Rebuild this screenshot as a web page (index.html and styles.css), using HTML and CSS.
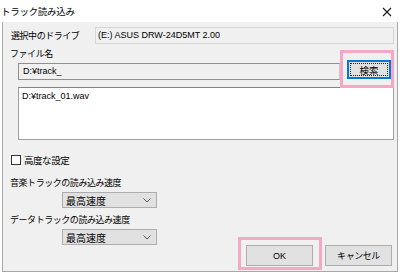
FILE: index.html
```html
<!DOCTYPE html>
<html lang="ja">
<head>
    <meta charset="UTF-8">
    <title>トラック読み込み</title>
    <link rel="stylesheet" href="styles.css">
</head>
<body>
    <div class="dialog">
        <div class="titlebar">
            <span class="title">トラック読み込み</span>
            <svg class="close" width="10" height="10" viewBox="0 0 10 10">
                <path d="M1 1 L9 9 M9 1 L1 9" stroke="#1a1a1a" stroke-width="1.1" fill="none"/>
            </svg>
        </div>
        <div class="content">
            <!-- Drive -->
            <div class="drive-row">
                <span class="drive-label jp">選択中のドライブ</span>
                <div class="readonly">(E:) ASUS DRW-24D5MT 2.00</div>
            </div>

            <!-- File name -->
            <div class="file-label jp">ファイル名</div>
            <div class="file-row">
                <div class="textbox">D:¥track_</div>
                <div class="marked search-wrap">
                    <button class="btn btn-default">検索</button>
                    <span class="mark"></span>
                </div>
            </div>
            <div class="listbox">D:¥track_01.wav</div>

            <div class="lower">
                <div class="options">
                    <div class="check jp"><span class="box"></span>高度な設定</div>
                    <div class="speed-label jp">音楽トラックの読み込み速度</div>
                    <div class="select">
                        <span>最高速度</span>
                        <svg width="8" height="5" viewBox="0 0 8 5"><path d="M0.5 0.5 L4 4 L7.5 0.5" stroke="#555" fill="none"/></svg>
                    </div>
                    <div class="speed-label second jp">データトラックの読み込み速度</div>
                    <div class="select">
                        <span>最高速度</span>
                        <svg width="8" height="5" viewBox="0 0 8 5"><path d="M0.5 0.5 L4 4 L7.5 0.5" stroke="#555" fill="none"/></svg>
                    </div>
                </div>
                <div class="actions">
                    <div class="marked ok-wrap">
                        <button class="btn">OK</button>
                        <span class="mark"></span>
                    </div>
                    <button class="btn jp">キャンセル</button>
                </div>
            </div>
        </div>
    </div>
</body>
</html>
```

FILE: styles.css
```css
body {
    margin: 0;
    background-color: #ffffff;
    font-family: "Liberation Sans", "Noto Sans CJK JP", sans-serif;
    font-size: 9px;
    color: #000;
}
.jp {
    letter-spacing: -0.45px;
}
.dialog {
    width: 400px;
    height: 274px;
    overflow: hidden;
}
.titlebar {
    height: 22px;
    display: flex;
    align-items: center;
    justify-content: space-between;
    background-color: #fff;
}
.title {
    padding-left: 1px;
    font-size: 9.5px;
    letter-spacing: -0.3px;
}
.close {
    margin-right: 8px;
    margin-top: 2px;
}
.content {
    box-sizing: border-box;
    height: 250px;
    margin-left: 2px;
    width: 396px;
    border-left: 1px solid #a8a8a8;
    border-right: 1px solid #a8a8a8;
    border-bottom: 1px solid #a8a8a8;
    background-color: #f0f0f0;
    padding: 5px 3px 4px 7px;
    display: flex;
    flex-direction: column;
}
.drive-row {
    display: flex;
    height: 17px;
    align-items: center;
}
.drive-label {
    width: 85px;
    padding-left: 1px;
    box-sizing: border-box;
}
.readonly {
    flex: 1;
    height: 17px;
    box-sizing: border-box;
    border: 1px solid #d6d6d6;
    padding-left: 2px;
    line-height: 15px;
}
.file-label {
    margin-top: 4px;
    height: 12px;
    line-height: 12px;
}
.file-row {
    display: flex;
    align-items: flex-start;
}
.textbox {
    margin: 3px 0 0 8px;
    width: 322px;
    height: 17px;
    box-sizing: border-box;
    border: 1px solid #8f8f8f;
    border-right-color: #c8c8c8;
    background-color: #f0f0f0;
    padding-left: 4px;
    line-height: 15px;
}
.marked {
    position: relative;
}
.mark {
    position: absolute;
    border: 3px solid #f3a9c6;
    pointer-events: none;
}
.search-wrap {
    margin-left: 7px;
}
.search-wrap .mark {
    left: -7px;
    right: -3px;
    top: -10px;
    bottom: -9px;
}
.btn {
    font-family: inherit;
    font-size: 9px;
    background-color: #e1e1e1;
    border: 1px solid #adadad;
    padding: 0;
    color: #000;
    margin: 0;
}
.btn-default {
    width: 44px;
    height: 19px;
    font-size: 9.5px;
    border-color: #0078d7;
    box-shadow: inset 0 0 0 1px #0078d7;
    outline: 1px dotted #222;
    outline-offset: -4px;
}
.listbox {
    margin: 7px 0 0 8px;
    height: 53px;
    box-sizing: border-box;
    border: 1px solid #a0a0a0;
    border-top-color: #828282;
    background-color: #fff;
    padding: 2px 3px;
    line-height: 12px;
}
.lower {
    flex: 1;
    display: flex;
    justify-content: space-between;
}
.options {
    display: flex;
    flex-direction: column;
}
.check {
    margin-top: 13px;
    height: 13px;
    display: flex;
    align-items: center;
    padding-left: 1px;
    font-size: 9.5px;
}
.box {
    width: 10px;
    height: 10px;
    box-sizing: border-box;
    border: 1px solid #333;
    background-color: #fff;
    margin-right: 3px;
}
.speed-label {
    margin-top: 11px;
    height: 12px;
    line-height: 12px;
}
.speed-label.second {
    margin-top: 6px;
}
.select {
    margin: 3px 0 0 52px;
    width: 95px;
    height: 16px;
    box-sizing: border-box;
    border: 1px solid #adadad;
    background-color: #e1e1e1;
    display: flex;
    align-items: center;
    justify-content: space-between;
    padding: 0 5px 0 3px;
    font-size: 10px;
}
.actions {
    align-self: flex-end;
    display: flex;
    gap: 12px;
    margin-right: 2px;
    margin-bottom: 1px;
}
.actions .btn {
    width: 67px;
    height: 21px;
}
.ok-wrap .mark {
    left: -8px;
    right: -9px;
    top: -8px;
    bottom: -4px;
}
```
